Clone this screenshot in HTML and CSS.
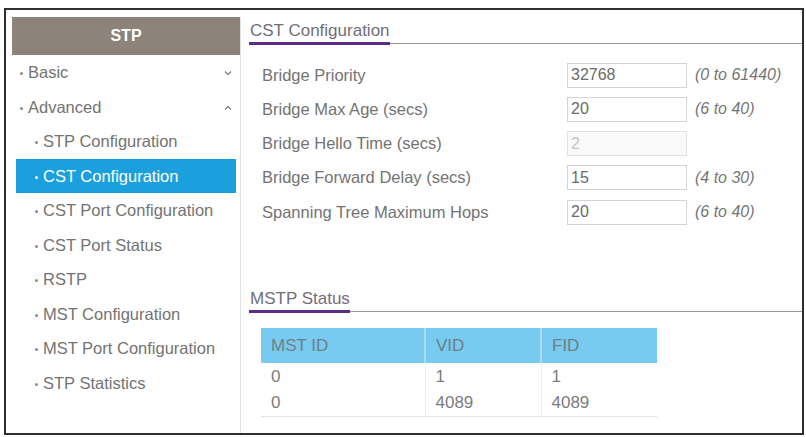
FILE: index.html
```html
<!DOCTYPE html>
<html lang="en">
<head>
  <meta charset="UTF-8">
  <meta name="viewport" content="width=device-width, initial-scale=1.0">
  <title>CST Configuration</title>
  <link rel="stylesheet" href="styles.css">
</head>
<body>
  <div class="frame">
    <nav class="sidebar">
      <div class="side-title">STP</div>
      <ul class="menu">
        <li class="item top">Basic
          <svg class="chev" width="8" height="6" viewBox="0 0 8 6"><polyline points="1,1.5 4,4.5 7,1.5" fill="none" stroke="#888" stroke-width="1.4"/></svg>
        </li>
        <li class="item top">Advanced
          <svg class="chev" width="8" height="6" viewBox="0 0 8 6"><polyline points="1,4.5 4,1.5 7,4.5" fill="none" stroke="#888" stroke-width="1.4"/></svg>
        </li>
        <li class="item sub">STP Configuration</li>
        <li class="item sub active">CST Configuration</li>
        <li class="item sub">CST Port Configuration</li>
        <li class="item sub">CST Port Status</li>
        <li class="item sub">RSTP</li>
        <li class="item sub">MST Configuration</li>
        <li class="item sub">MST Port Configuration</li>
        <li class="item sub">STP Statistics</li>
      </ul>
    </nav>

    <main class="main">
      <div class="section-head"><span>CST Configuration</span></div>
      <div class="form">
        <div class="row">
          <label>Bridge Priority</label>
          <input type="text" value="32768">
          <span class="range">(0 to 61440)</span>
        </div>
        <div class="row">
          <label>Bridge Max Age (secs)</label>
          <input type="text" value="20">
          <span class="range">(6 to 40)</span>
        </div>
        <div class="row">
          <label>Bridge Hello Time (secs)</label>
          <input type="text" value="2" disabled>
        </div>
        <div class="row">
          <label>Bridge Forward Delay (secs)</label>
          <input type="text" value="15">
          <span class="range">(4 to 30)</span>
        </div>
        <div class="row">
          <label>Spanning Tree Maximum Hops</label>
          <input type="text" value="20">
          <span class="range">(6 to 40)</span>
        </div>
      </div>

      <div class="section-head second"><span>MSTP Status</span></div>
      <table class="status-table">
        <thead>
          <tr><th class="c1">MST ID</th><th class="c2">VID</th><th class="c3">FID</th></tr>
        </thead>
        <tbody>
          <tr><td>0</td><td>1</td><td>1</td></tr>
          <tr><td>0</td><td>4089</td><td>4089</td></tr>
        </tbody>
      </table>
    </main>
  </div>
</body>
</html>
```

FILE: styles.css
```css
body {
  margin: 0;
  background: #fff;
  font-family: 'Liberation Sans', Arial, sans-serif;
  color: #666;
}
.frame {
  display: flex;
  box-sizing: border-box;
  width: 800px;
  height: 427px;
  margin: 8px 0 0 4px;
  border: 2px solid #2f2f2f;
  overflow: hidden;
}
.sidebar {
  width: 228px;
  margin: 7px 0 0 6px;
  border-right: 1px solid #e4e4e4;
  flex-shrink: 0;
}
.side-title {
  height: 38px;
  line-height: 38px;
  background: #8c837b;
  color: #fff;
  font-size: 16px;
  font-weight: bold;
  text-align: center;
}
.menu {
  list-style: none;
  margin: 0;
  padding: 0;
}
.item {
  position: relative;
  height: 34.5px;
  line-height: 34.5px;
  font-size: 16.5px;
  color: #737373;
  white-space: nowrap;
}
.item::before {
  content: "";
  display: inline-block;
  width: 3px;
  height: 3px;
  border-radius: 50%;
  background: #8a8a8a;
  vertical-align: middle;
  margin-right: 5px;
}
.item.top { padding-left: 8px; }
.item.sub { padding-left: 23px; }
.item.active {
  margin: 0 4px;
  padding-left: 19px;
  background: #1aa0dd;
  color: #fff;
}
.item.active::before { background: #fff; }
.chev {
  position: absolute;
  right: 8px;
  top: 15px;
}
.main {
  flex: 1;
  padding-left: 8px;
}
.section-head {
  display: flex;
  border-bottom: 1px solid #9a9a9a;
}
.section-head span {
  padding: 11px 0 1px 1px;
  line-height: 20px;
  font-size: 17px;
  color: #716e7a;
  border-bottom: 3px solid #5b2d86;
  margin-bottom: -2px;
}
.section-head.second { margin-top: 49px; }
.form {
  padding: 14px 0 0 13px;
}
.row {
  display: flex;
  align-items: center;
  height: 34.25px;
}
.row label {
  width: 305px;
  font-size: 16.5px;
  color: #737373;
}
.row input {
  box-sizing: border-box;
  width: 120px;
  height: 25px;
  padding: 0 3px;
  border: 1px solid #d4d4d4;
  font-family: inherit;
  font-size: 16px;
  color: #6a6a6a;
  background: #fff;
}
.row input:disabled {
  background: #f9f9f9;
  color: #c4c4c4;
  border-color: #e2e2e2;
}
.range {
  margin-left: 8px;
  font-size: 16px;
  font-style: italic;
  color: #767676;
}
.status-table {
  margin: 16px 0 0 12px;
  border-collapse: collapse;
  font-size: 17px;
}
.status-table th {
  height: 35px;
  padding: 0 0 0 10px;
  background: #77caf0;
  color: #707e86;
  font-weight: normal;
  text-align: left;
  border-left: 2px solid #a9dcf4;
}
.status-table th.c1 { width: 153px; border-left: none; }
.status-table th.c2 { width: 104px; }
.status-table th.c3 { width: 105px; }
.status-table td {
  height: 26.5px;
  padding: 0 0 0 10px;
  color: #7c7c7c;
  border-left: 1px solid #eeeeee;
}
.status-table td:first-child { border-left: none; }
.status-table tbody tr:last-child td {
  border-bottom: 1px solid #e2e2e2;
}
```
